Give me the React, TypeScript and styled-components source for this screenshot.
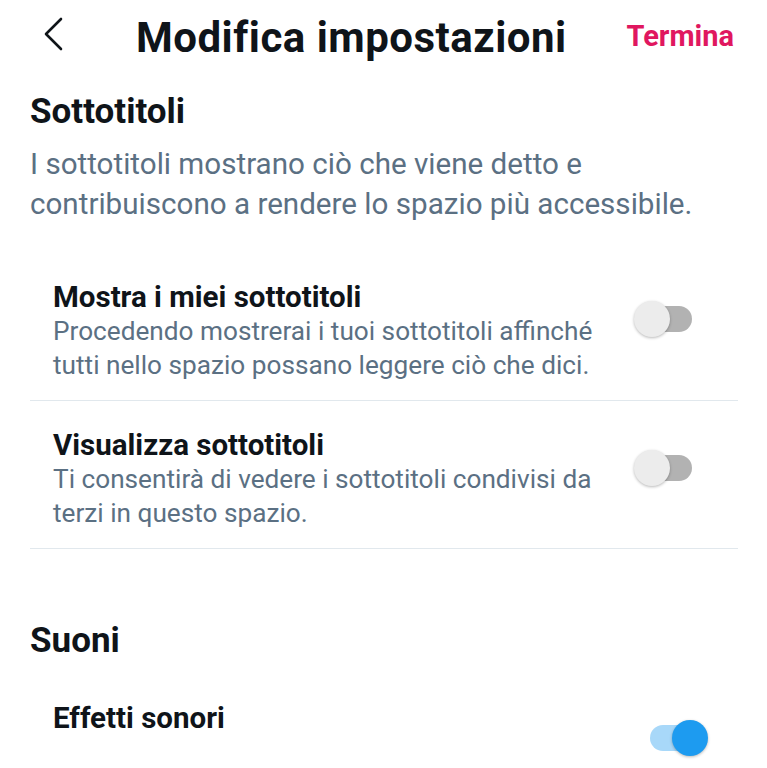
import React, { useState } from "react";
import styled, { createGlobalStyle } from "styled-components";

const GlobalStyle = createGlobalStyle`
  * {
    box-sizing: border-box;
  }
  body {
    margin: 0;
    background: #fff;
    font-family: Roboto, "Noto Sans", "Liberation Sans", sans-serif;
    color: #0f1419;
  }
`;

const Page = styled.div`
  width: 767px;
  height: 768px;
  overflow: hidden;
  background: #fff;
`;

const Header = styled.header`
  display: flex;
  align-items: center;
  height: 76px;
  padding: 0 33px 0 43px;
`;

const BackButton = styled.button`
  display: flex;
  align-items: center;
  padding: 0;
  margin: -8px 0 0 0;
  border: none;
  background: none;
  color: #0f1419;
  cursor: pointer;
`;

const HeaderTitle = styled.h1`
  margin: 0 0 0 73px;
  font-size: 42px;
  line-height: 48px;
  font-weight: 700;
  letter-spacing: 0.5px;
`;

const DoneButton = styled.button`
  margin-left: auto;
  margin-top: -4px;
  padding: 0;
  border: none;
  background: none;
  font-family: inherit;
  font-size: 29px;
  line-height: 34px;
  font-weight: 700;
  color: #e0175f;
  cursor: pointer;
`;

const Section = styled.section<{ $top: number }>`
  margin-top: ${({ $top }) => $top}px;
  padding: 0 29px 0 30px;
`;

const SectionTitle = styled.h2`
  margin: 0;
  font-size: 35px;
  line-height: 40px;
  font-weight: 700;
`;

const SectionText = styled.p`
  margin: 12px 0 27px 0;
  font-size: 29.6px;
  line-height: 40px;
  color: #5b7083;
`;

const Row = styled.div<{ $divider: boolean; $top: number; $bottom: number; $right: number }>`
  display: flex;
  align-items: flex-start;
  padding: ${({ $top, $bottom, $right }) => `${$top}px ${$right}px ${$bottom}px 23px`};
  border-bottom: ${({ $divider }) => ($divider ? "1px solid #e1e8ed" : "none")};
`;

const RowText = styled.div`
  flex: 1;
`;

const RowTitle = styled.div`
  font-size: 29.5px;
  line-height: 34px;
  font-weight: 700;
`;

const RowHint = styled.div`
  font-size: 26.2px;
  line-height: 34px;
  color: #5b7083;
  max-width: 560px;
`;

const SwitchBox = styled.button`
  position: relative;
  flex-shrink: 0;
  width: 58px;
  height: 38px;
  padding: 0;
  border: none;
  background: none;
  cursor: pointer;
`;

const SwitchTrack = styled.span<{ $on: boolean }>`
  position: absolute;
  top: 6px;
  left: ${({ $on }) => ($on ? "0" : "5px")};
  right: ${({ $on }) => ($on ? "6px" : "0")};
  height: 26px;
  border-radius: 13px;
  background: ${({ $on }) => ($on ? "#a8d8f9" : "#b2b2b2")};
`;

const SwitchKnob = styled.span<{ $on: boolean }>`
  position: absolute;
  top: 1px;
  left: ${({ $on }) => ($on ? "22px" : "0")};
  width: 36px;
  height: 36px;
  border-radius: 50%;
  background: ${({ $on }) => ($on ? "#1d9bf0" : "#ececec")};
  box-shadow: 0 1px 3px rgba(0, 0, 0, 0.28);
`;

function Switch({ on, onToggle, offset }: { on: boolean; onToggle: () => void; offset: number }) {
  return (
    <SwitchBox onClick={onToggle} style={{ marginTop: offset }}>
      <SwitchTrack $on={on} />
      <SwitchKnob $on={on} />
    </SwitchBox>
  );
}

function ChevronLeft() {
  return (
    <svg width="20" height="34" viewBox="0 0 20 34" fill="none">
      <path d="M18 2 L3 17 L18 32" stroke="currentColor" strokeWidth="2.6" strokeLinecap="round" strokeLinejoin="round" />
    </svg>
  );
}

export default function App() {
  const [showMine, setShowMine] = useState(false);
  const [showOthers, setShowOthers] = useState(false);
  const [sounds, setSounds] = useState(true);

  return (
    <Page>
      <GlobalStyle />
      <Header>
        <BackButton aria-label="Indietro">
          <ChevronLeft />
        </BackButton>
        <HeaderTitle>Modifica impostazioni</HeaderTitle>
        <DoneButton>Termina</DoneButton>
      </Header>

      <Section $top={16}>
        <SectionTitle>Sottotitoli</SectionTitle>
        <SectionText>
          I sottotitoli mostrano ciò che viene detto e<br />
          contribuiscono a rendere lo spazio più accessibile.
        </SectionText>
        <Row $divider $top={29} $bottom={18} $right={46}>
          <RowText>
            <RowTitle>Mostra i miei sottotitoli</RowTitle>
            <RowHint>Procedendo mostrerai i tuoi sottotitoli affinché tutti nello spazio possano leggere ciò che dici.</RowHint>
          </RowText>
          <Switch on={showMine} onToggle={() => setShowMine(!showMine)} offset={20} />
        </Row>
        <Row $divider $top={27} $bottom={18} $right={46}>
          <RowText>
            <RowTitle>Visualizza sottotitoli</RowTitle>
            <RowHint>Ti consentirà di vedere i sottotitoli condivisi da terzi in questo spazio.</RowHint>
          </RowText>
          <Switch on={showOthers} onToggle={() => setShowOthers(!showOthers)} offset={21} />
        </Row>
      </Section>

      <Section $top={72}>
        <SectionTitle>Suoni</SectionTitle>
        <Row $divider={false} $top={40} $bottom={0} $right={30}>
          <RowText>
            <RowTitle>Effetti sonori</RowTitle>
          </RowText>
          <Switch on={sounds} onToggle={() => setSounds(!sounds)} offset={18} />
        </Row>
      </Section>
    </Page>
  );
}
